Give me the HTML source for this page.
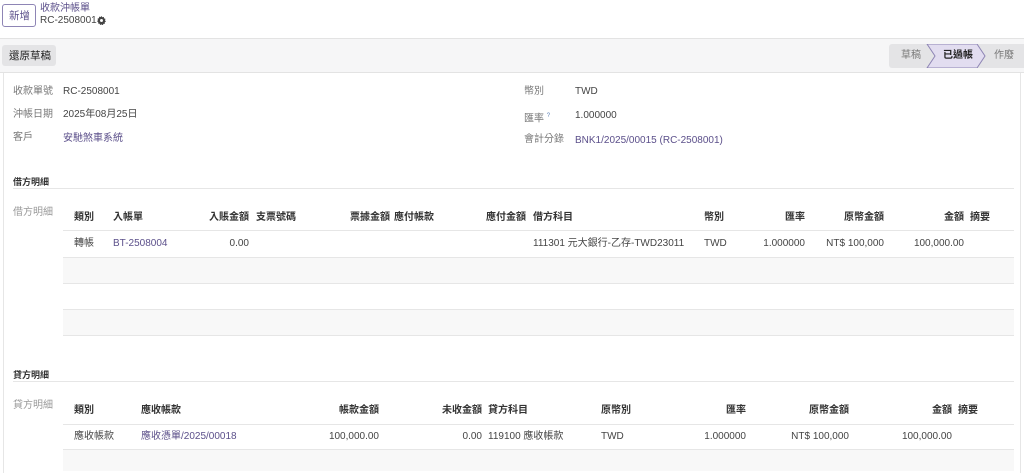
<!DOCTYPE html>
<html><head><meta charset="utf-8"><style>
*{margin:0;padding:0;box-sizing:border-box}
body{width:1024px;height:471px;overflow:hidden;background:#fff;font-family:"Liberation Sans","Noto Sans CJK TC",sans-serif;font-size:10px;color:#444;position:relative}
.a{position:absolute;white-space:nowrap;line-height:12px}
.r{transform:translateX(-100%)}
.b{font-weight:bold;color:#333}
.l{color:#5b4f8a}
.g{color:#777}
.hl{position:absolute;height:1px;background:#e6e6e6}
.st{position:absolute;background:#f8f8f8}
.t{margin-top:2px}
</style></head><body>
<!-- top -->
<div style="position:absolute;left:2px;top:4px;width:34px;height:23px;border:1px solid #8e85b5;border-radius:3px;background:#fff"></div>
<div class="a" style="left:9px;top:10px;color:#5b4f8a;font-size:10.5px">新增</div>
<div class="a l" style="left:40px;top:3px">收款沖帳單</div>
<div class="a" style="left:40px;top:15px;font-size:10px">RC-2508001</div>
<svg class="a" style="left:97px;top:16px" width="9" height="9" viewBox="0 0 16 16"><path fill="#444" d="M8 0l1.5 2.2 2.6-.6.5 2.6 2.5 1-.9 2.5 1.8 2-2.2 1.5.2 2.6-2.6.3-1.1 2.4L8 14.9l-2.3 1.2-1.1-2.4-2.6-.3.2-2.6L0 9.3l1.8-2-.9-2.5 2.5-1 .5-2.6 2.6.6z"/><circle cx="8" cy="8" r="2.6" fill="#fff"/></svg>
<div style="position:absolute;left:0;top:38px;width:1024px;height:35px;background:#f6f6f7;border-top:1px solid #e3e3e3;border-bottom:1px solid #e3e3e3"></div>
<div style="position:absolute;left:2px;top:45px;width:54px;height:21px;background:#e4e4e6;border-radius:3px"></div>
<div class="a" style="left:9px;top:50px;color:#222;font-size:10.5px">還原草稿</div>
<svg class="a" style="left:889px;top:44px" width="135" height="24" viewBox="0 0 135 24"><path d="M3 0H135V24H3a3 3 0 0 1-3-3V3a3 3 0 0 1 3-3z" fill="#e4e4e6"/><path d="M38 0H88L96 12L88 24H38L46 12Z" fill="#e2ddf0" stroke="#8e85b5" stroke-width="1"/></svg>
<div class="a g" style="left:901px;top:50px">草稿</div>
<div class="a" style="left:943px;top:50px;color:#222;font-weight:bold">已過帳</div>
<div class="a g" style="left:994px;top:50px">作廢</div>
<!-- card -->
<div style="position:absolute;left:3px;top:73px;width:1018px;height:400px;border-left:1px solid #e6e6e6;border-right:1px solid #e6e6e6"></div>
<div class="a g" style="left:13px;top:86px">收款單號</div><div class="a" style="left:63px;top:86px">RC-2508001</div>
<div class="a g" style="left:13px;top:109px">沖帳日期</div><div class="a" style="left:63px;top:109px">2025年08月25日</div>
<div class="a g" style="left:13px;top:132px">客戶</div><div class="a l" style="left:63px;top:133px">安馳煞車系統</div>
<div class="a g" style="left:524px;top:86px">幣別</div><div class="a" style="left:575px;top:86px">TWD</div>
<div class="a g" style="left:524px;top:110px">匯率 <sup style="font-size:6px;color:#5b7fb5">?</sup></div><div class="a" style="left:575px;top:110px">1.000000</div>
<div class="a g" style="left:524px;top:134px">會計分錄</div><div class="a l" style="left:575px;top:135px">BNK1/2025/00015 (RC-2508001)</div>
<!-- debit -->
<div class="a b" style="left:13px;top:176px;font-size:9px">借方明細</div>
<div class="hl" style="left:13px;top:188px;width:1001px"></div>
<div class="a g" style="left:13px;top:207px;color:#999">借方明細</div>
<div class="hl" style="left:63px;top:230px;width:951px"></div>
<div class="hl" style="left:63px;top:257px;width:951px"></div>
<div class="st" style="left:63px;top:258px;width:951px;height:25px"></div>
<div class="hl" style="left:63px;top:283px;width:951px"></div>
<div class="hl" style="left:63px;top:309px;width:951px"></div>
<div class="st" style="left:63px;top:310px;width:951px;height:25px"></div>
<div class="hl" style="left:63px;top:335px;width:951px"></div>
<div class="a b" style="left:74px;top:212px">類別</div>
<div class="a b" style="left:113px;top:212px">入帳單</div>
<div class="a b r" style="left:249px;top:212px">入賬金額</div>
<div class="a b" style="left:256px;top:212px">支票號碼</div>
<div class="a b r" style="left:390px;top:212px">票據金額</div>
<div class="a b" style="left:394px;top:212px">應付帳款</div>
<div class="a b r" style="left:526px;top:212px">應付金額</div>
<div class="a b" style="left:533px;top:212px">借方科目</div>
<div class="a b" style="left:704px;top:212px">幣別</div>
<div class="a b r" style="left:805px;top:212px">匯率</div>
<div class="a b r" style="left:884px;top:212px">原幣金額</div>
<div class="a b r" style="left:964px;top:212px">金額</div>
<div class="a b" style="left:970px;top:212px">摘要</div>
<div class="a" style="left:74px;top:238px">轉帳</div>
<div class="a l" style="left:113px;top:238px">BT-2508004</div>
<div class="a r" style="left:249px;top:238px">0.00</div>
<div class="a" style="left:533px;top:238px">111301 元大銀行-乙存-TWD23011</div>
<div class="a" style="left:704px;top:238px">TWD</div>
<div class="a r" style="left:805px;top:238px">1.000000</div>
<div class="a r" style="left:884px;top:238px">NT$ 100,000</div>
<div class="a r" style="left:964px;top:238px">100,000.00</div>
<!-- credit -->
<div class="a b" style="left:13px;top:369px;font-size:9px">貸方明細</div>
<div class="hl" style="left:13px;top:381px;width:1001px"></div>
<div class="a g" style="left:13px;top:400px;color:#999">貸方明細</div>
<div class="hl" style="left:63px;top:424px;width:951px"></div>
<div class="hl" style="left:63px;top:449px;width:951px"></div>
<div class="st" style="left:63px;top:450px;width:951px;height:21px"></div>
<div class="a b" style="left:74px;top:405px">類別</div>
<div class="a b" style="left:141px;top:405px">應收帳款</div>
<div class="a b r" style="left:379px;top:405px">帳款金額</div>
<div class="a b r" style="left:482px;top:405px">未收金額</div>
<div class="a b" style="left:488px;top:405px">貸方科目</div>
<div class="a b" style="left:601px;top:405px">原幣別</div>
<div class="a b r" style="left:746px;top:405px">匯率</div>
<div class="a b r" style="left:849px;top:405px">原幣金額</div>
<div class="a b r" style="left:952px;top:405px">金額</div>
<div class="a b" style="left:958px;top:405px">摘要</div>
<div class="a" style="left:74px;top:431px">應收帳款</div>
<div class="a l" style="left:141px;top:431px">應收憑單/2025/00018</div>
<div class="a r" style="left:379px;top:431px">100,000.00</div>
<div class="a r" style="left:482px;top:431px">0.00</div>
<div class="a" style="left:488px;top:431px">119100 應收帳款</div>
<div class="a" style="left:601px;top:431px">TWD</div>
<div class="a r" style="left:746px;top:431px">1.000000</div>
<div class="a r" style="left:849px;top:431px">NT$ 100,000</div>
<div class="a r" style="left:952px;top:431px">100,000.00</div>
</body></html>
